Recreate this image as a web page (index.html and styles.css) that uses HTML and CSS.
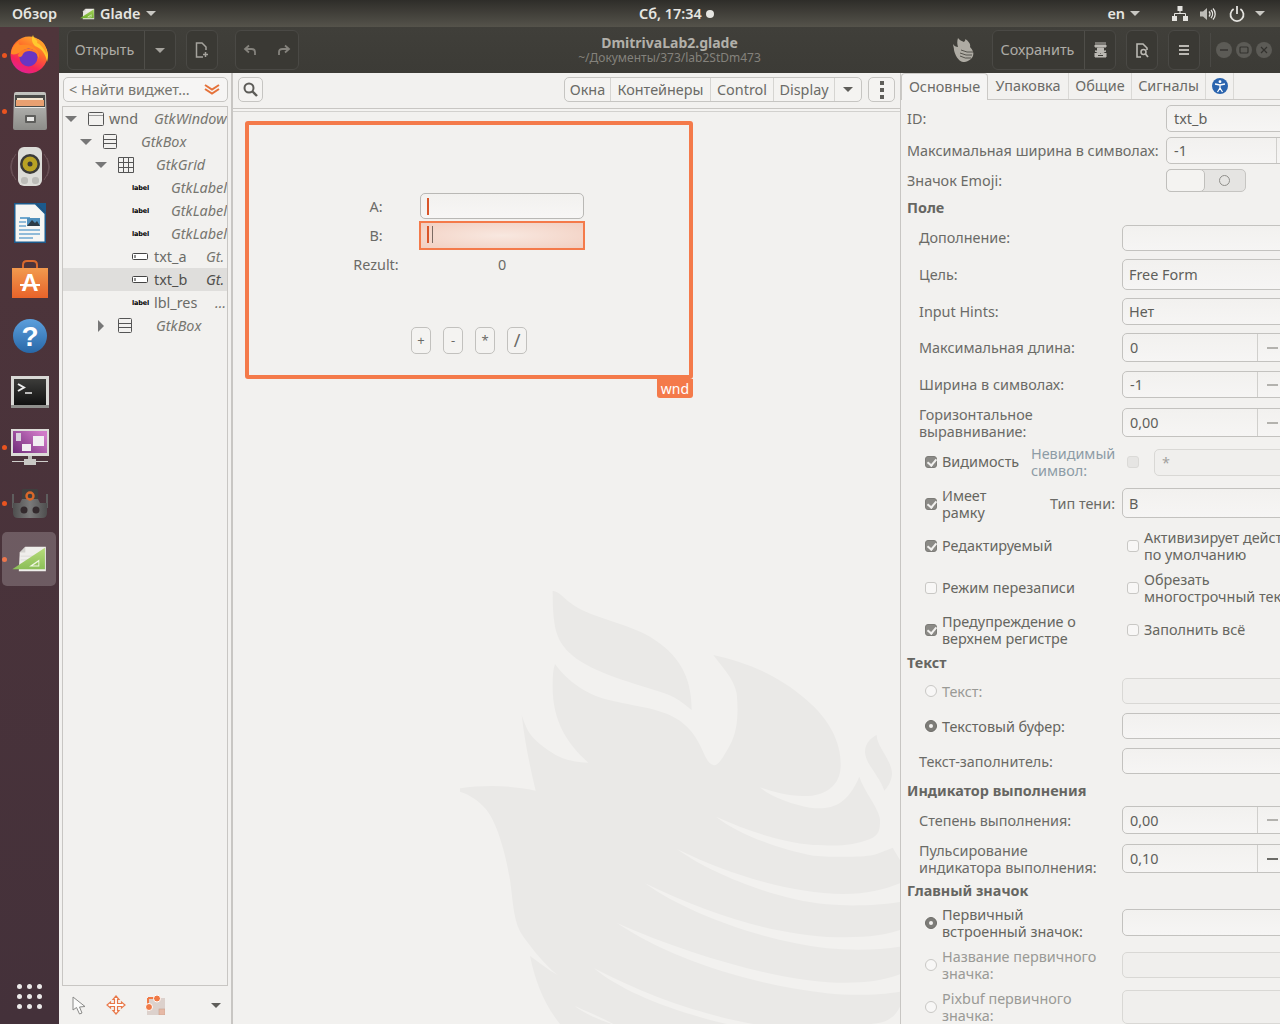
FILE: index.html
```html
<!DOCTYPE html>
<html lang="ru">
<head>
<meta charset="utf-8">
<title>Glade</title>
<link rel="stylesheet" href="styles.css">
</head>
<body>
<svg class="defs" width="0" height="0">
  <defs>
    <linearGradient id="ff" x1="0.8" y1="0" x2="0.3" y2="1"><stop offset="0" stop-color="#ffb52e"/><stop offset=".4" stop-color="#ff6a2a"/><stop offset=".75" stop-color="#f5245c"/><stop offset="1" stop-color="#e0209a"/></linearGradient>
    <linearGradient id="metal" x1="0" y1="0" x2="0" y2="1"><stop offset="0" stop-color="#c4c4c0"/><stop offset="1" stop-color="#8c8c89"/></linearGradient>
    <linearGradient id="bag" x1="0" y1="0" x2="0" y2="1"><stop offset="0" stop-color="#f29a4e"/><stop offset="1" stop-color="#e8632a"/></linearGradient>
    <linearGradient id="help" x1="0" y1="0" x2="0" y2="1"><stop offset="0" stop-color="#5c9fdc"/><stop offset="1" stop-color="#2868a8"/></linearGradient>
    <linearGradient id="term" x1="0" y1="0" x2="0" y2="1"><stop offset="0" stop-color="#3c3c3a"/><stop offset="1" stop-color="#111"/></linearGradient>
    <linearGradient id="purple" x1="0" y1="1" x2="1" y2="0.300"><stop offset="0" stop-color="#6e2a78"/><stop offset="1" stop-color="#d07ac8"/></linearGradient>
    <linearGradient id="green" x1="0" y1="0" x2="0" y2="1"><stop offset="0" stop-color="#a5d35a"/><stop offset="1" stop-color="#6fae2e"/></linearGradient>
    <linearGradient id="robot" x1="0" y1="0" x2="1" y2="0"><stop offset="0" stop-color="#4e4e4e"/><stop offset=".5" stop-color="#7a7a7a"/><stop offset="1" stop-color="#4e4e4e"/></linearGradient>
    <symbol id="glade-ic" viewBox="0 0 38 30">
      <path d="M8 8 L14 2 H36 V28 H7 Z" fill="#eceae6"/>
      <path d="M8 8 L14 2 V8 Z" fill="#c9c7c2"/>
      <path d="M9 12H24M9 16H20M9 20H15" stroke="#d4d2cd" stroke-width="1"/>
      <path d="M0 26 L35 3 V26 Z" fill="url(#green)"/>
      <path d="M18 23 L29 15.500 V23 Z" fill="#eef5dd"/>
      <path d="M22 22 L28 18 V22 Z" fill="#7db53a"/>
    </symbol>
  </defs>
</svg>

<div class="screen">
  <header class="topbar">
    <div class="tb-left">
      <span class="tb-item tb-overview">Обзор</span>
      <svg class="tb-glade" width="15" height="14"><use href="#glade-ic"/></svg>
      <span class="tb-item tb-app">Glade</span>
      <i class="caret caret-light"></i>
    </div>
    <div class="tb-clock"><span class="tb-item">Сб, 17:34</span><i class="clock-dot"></i></div>
    <div class="tb-right">
      <span class="tb-item">en</span>
      <i class="caret caret-light tb-en-caret"></i>
      <svg class="tb-net" width="16" height="15" viewBox="0 0 16 15"><path d="M5.500 0h5v5h-5zM0 10h5v5H0zM11 10h5v5h-5z" fill="#e4e3df"/><path d="M8 5v3M2.500 10V7.500h11V10" stroke="#e4e3df" fill="none"/></svg>
      <svg class="tb-vol" width="16" height="14" viewBox="0 0 16 14"><path d="M0 4.500h3L7 1v12L3 9.500H0z" fill="#bdbcb7"/><path d="M9 4.500a3.500 3.500 0 0 1 0 5M11 3a6 6 0 0 1 0 8M13 1.500a8 8 0 0 1 0 11" stroke="#e4e3df" stroke-width="1.300" fill="none"/></svg>
      <svg class="tb-pow" width="16" height="16" viewBox="0 0 16 16"><path d="M4.600 3a6.500 6.500 0 1 0 6.800 0" stroke="#e4e3df" stroke-width="1.800" fill="none"/><path d="M8 0v8" stroke="#e4e3df" stroke-width="1.800"/></svg>
      <i class="caret caret-light tb-pow-caret"></i>
    </div>
  </header>

  <nav class="dock">
    <div class="dock-item running">
      <svg width="40" height="40" viewBox="0 0 40 40">
        <circle cx="19" cy="20" r="18.500" fill="url(#ff)"/>
        <path d="M23 0 C24 6 33 8 36 13 C39 18 38 24 37 27 C36 19 31 13 25 11 C22 8 21 4 23 0Z" fill="#ffc92e"/>
        <path d="M28 4 C32 6 35 9 36 13 L37 20 C34 13 30 9 27 8Z" fill="#ff9d2a"/>
        <path d="M1 19 C1 13 5 8 9 7 C8 9 9 10 11 10 C16 9 24 10 28 17 C29 19 29 21 29 24 C27 16 18 13 13 16 C8 19 4 20 1 19Z" fill="#ff8a26"/>
        <circle cx="18.500" cy="22.500" r="9" fill="#6a35c2"/>
        <path d="M8 21 C9 15 17 12 24 15 C27 16 28 18 28 20 C24 15 15 15 13 19 C12 22 10 23 8 21Z" fill="#ff7a2a"/>
      </svg>
    </div>
    <div class="dock-item running">
      <svg width="36" height="38" viewBox="0 0 36 38">
        <path d="M2 2 Q2 0 4 0 H32 Q34 0 34 2 L35 36 Q35 38 33 38 H3 Q1 38 1 36Z" fill="url(#metal)"/>
        <rect x="3" y="3" width="30" height="12" fill="#4a4a48"/>
        <rect x="4" y="8" width="28" height="6" fill="#e9a071"/>
        <rect x="5" y="6" width="26" height="2" fill="#f4e6d2"/>
        <rect x="3" y="15" width="30" height="1" fill="#e8e8e6"/>
        <rect x="13" y="23" width="11" height="8" rx="1" fill="#5e5e5c"/>
        <rect x="15" y="25" width="7" height="4" fill="#e8e8e6"/>
      </svg>
    </div>
    <div class="dock-item">
      <svg width="40" height="42" viewBox="0 0 40 42">
        <path d="M6 8a20 20 0 0 0 0 26M34 8a20 20 0 0 1 0 26M3 12a20 20 0 0 0 0 18M37 12a20 20 0 0 1 0 18" stroke="#6b5258" fill="none"/>
        <rect x="8" y="1" width="24" height="39" rx="6" fill="#dcdcd8"/>
        <circle cx="20" cy="18" r="10" fill="#3a3a38"/>
        <circle cx="20" cy="18" r="7.500" fill="#b9a224"/>
        <circle cx="20" cy="18" r="2.500" fill="#3a3a38"/>
        <rect x="11" y="31" width="7" height="7" rx="3" fill="#bcbcb8"/>
        <rect x="22" y="31" width="7" height="7" rx="3" fill="#bcbcb8"/>
      </svg>
    </div>
    <div class="dock-item">
      <svg width="32" height="40" viewBox="0 0 32 40">
        <path d="M0 0 H22 L32 10 V40 H0Z" fill="#1b5a8c"/>
        <path d="M1.500 1.500 H21 L30.500 11 V38.500 H1.500Z" fill="#f6f6f4"/>
        <path d="M22 0 L32 0 V10Z" fill="#1b5a8c"/>
        <rect x="6" y="14" width="10" height="2" fill="#6fa8cf"/>
        <rect x="13" y="15" width="13" height="8" fill="#4f8fbc"/>
        <path d="M13 23 L18 17 L21 20 L23 18 L26 23Z" fill="#2d3b45"/>
        <path d="M5 19h7M5 23h7M5 27h21M5 31h21M5 35h14" stroke="#6fa8cf" stroke-width="1.500"/>
      </svg>
    </div>
    <div class="dock-item">
      <svg width="36" height="38" viewBox="0 0 36 38">
        <path d="M11 10 V5 Q11 1 15 1 H21 Q25 1 25 5 V10" stroke="#d96a2e" stroke-width="2" fill="none"/>
        <path d="M0 8 H36 V38 H0Z" fill="url(#bag)"/>
        <text class="ic-a" x="18" y="31" text-anchor="middle">A</text>
        <rect x="8" y="24" width="20" height="2" fill="#fff"/>
      </svg>
    </div>
    <div class="dock-item nudge">
      <svg width="34" height="34" viewBox="0 0 34 34">
        <circle cx="17" cy="17" r="17" fill="url(#help)"/>
        <text class="ic-q" x="17" y="27" text-anchor="middle">?</text>
      </svg>
    </div>
    <div class="dock-item nudge">
      <svg width="38" height="32" viewBox="0 0 38 32">
        <rect width="38" height="32" fill="#d9d9d6"/>
        <rect y="29" width="38" height="3" fill="#8f8f8c"/>
        <rect x="3" y="3" width="32" height="26" fill="url(#term)"/>
        <path d="M7 8 L13 11.500 L7 15" stroke="#eee" stroke-width="2" fill="none"/>
        <path d="M14 17h7" stroke="#eee" stroke-width="1.500"/>
      </svg>
    </div>
    <div class="dock-item running">
      <svg width="38" height="36" viewBox="0 0 38 36">
        <rect width="38" height="27" fill="#dcdcd8"/>
        <rect x="2" y="2" width="34" height="22" fill="url(#purple)"/>
        <rect x="5" y="4" width="5" height="8" fill="#d8d0dc"/>
        <rect x="22" y="7" width="11" height="10" fill="#f1eef2"/>
        <rect x="11" y="15" width="9" height="7" fill="#f1eef2"/>
        <rect x="17" y="27" width="4" height="3" fill="#bcbcb8"/>
        <rect x="13" y="30" width="12" height="6" fill="#c9c9c5"/>
        <path d="M1 32.500h12M25 32.500h12" stroke="#cfcfcc"/>
      </svg>
    </div>
    <div class="dock-item running">
      <svg width="36" height="30" viewBox="0 0 36 30">
        <path d="M1 6v14M35 6v14" stroke="#5e5e5e" stroke-width="2"/>
        <rect x="10" y="1" width="16" height="12" rx="1" fill="#3f3f3f"/>
        <path d="M1 15 H8 L10 11 H26 L28 15 H35 V25 Q35 30 30 30 H6 Q1 30 1 25Z" fill="url(#robot)"/>
        <circle cx="12" cy="22" r="3.500" fill="#332a2d"/>
        <circle cx="24" cy="22" r="3.500" fill="#332a2d"/>
        <circle cx="18" cy="8" r="3.500" fill="none" stroke="#d9682a" stroke-width="2.400"/>
      </svg>
    </div>
    <div class="dock-item running active">
      <svg width="36" height="28" viewBox="0 0 38 30"><use href="#glade-ic"/></svg>
    </div>
    <div class="dock-apps">
      <i></i><i></i><i></i><i></i><i></i><i></i><i></i><i></i><i></i>
    </div>
  </nav>

  <div class="window">
    <div class="headerbar">
      <div class="hb-group hb-open"><span class="hb-btn hb-text">Открыть</span><span class="hb-btn hb-arrow"><i class="caret caret-grey"></i></span></div>
      <div class="hb-group hb-single">
        <svg width="14" height="16" viewBox="0 0 14 16"><path d="M8 15H1.500V1H7L11 5V8" stroke="#a5a39d" stroke-width="1.500" fill="none"/><path d="M10.500 10v5M8 12.500h5" stroke="#a5a39d" stroke-width="1.500"/></svg>
      </div>
      <div class="hb-group hb-undo">
        <svg width="14" height="12" viewBox="0 0 14 12"><path d="M6 1.500 L2 5 L6 8.500M2 5H8.500Q12 5 12 8 V11" stroke="#85837d" stroke-width="1.800" fill="none"/></svg>
        <svg width="14" height="12" viewBox="0 0 14 12"><path d="M8 1.500 L12 5 L8 8.500M12 5H5.500Q2 5 2 8 V11" stroke="#85837d" stroke-width="1.800" fill="none"/></svg>
      </div>
      <div class="hb-title"><strong>DmitrivaLab2.glade</strong><span>~/Документы/373/lab2StDm473</span></div>
      <svg class="hb-logo" width="21" height="24" viewBox="0 0 21 24">
        <path d="M5 0 C6 2 9 3 11 4 C13 2 12 1 12 1 C16 3 18 7 17 9 C20 12 21 15 20 18 C18 22 14 24 10 24 C5 23 2 17 1 12 C1 10 0 7 0 6 C1 8 3 9 5 9 C4 6 4 3 5 0Z" fill="#aeaba3"/>
        <path d="M8 12q6 3 12 2M7 15q6 3 12 2M7 18q5 3 11 2" stroke="#3d3c37" stroke-width=".8" fill="none"/>
      </svg>
      <div class="hb-group hb-save"><span class="hb-btn hb-text">Сохранить</span>
        <span class="hb-btn hb-saveas"><svg width="13" height="16" viewBox="0 0 13 16"><path d="M1 1h11M1 3h11v2H1zM3.500 6h6v3H12L6.500 12 1 9h2.500zM1 11v4h11v-4" fill="#bbb9b3" stroke="#bbb9b3"/><path d="M4 13.500h5" stroke="#3d3c37"/></svg></span>
      </div>
      <div class="hb-group hb-single hb-docsearch">
        <svg width="13" height="15" viewBox="0 0 13 15"><path d="M5 14H1V1H7L11 5V7" stroke="#bbb9b3" stroke-width="1.600" fill="none"/><circle cx="7.500" cy="9" r="2.500" stroke="#bbb9b3" stroke-width="1.500" fill="none"/><path d="M9.500 11 L12 14" stroke="#bbb9b3" stroke-width="1.800"/></svg>
      </div>
      <div class="hb-group hb-single hb-menu"><i></i><i></i><i></i></div>
      <i class="hb-sep"></i>
      <div class="wm">
        <span class="wm-btn"><svg width="10" height="10" viewBox="0 0 10 10"><path d="M1 5h8" stroke="#33322e" stroke-width="1.400"/></svg></span>
        <span class="wm-btn"><svg width="10" height="10" viewBox="0 0 10 10"><rect x="1" y="2" width="8" height="6" rx="1" fill="none" stroke="#33322e" stroke-width="1.200"/></svg></span>
        <span class="wm-btn"><svg width="10" height="10" viewBox="0 0 10 10"><path d="M2 2l6 6M8 2l-6 6" stroke="#33322e" stroke-width="1.200"/></svg></span>
      </div>
    </div>

    <div class="panes">
      <aside class="palette">
        <div class="search-entry">
          <span class="search-text">&lt; Найти виджет…</span>
          <svg width="16" height="11" viewBox="0 0 16 11"><path d="M1 1 L8 5.500 L15 1M1 5 L8 9.500 L15 5" stroke="#e5723a" stroke-width="2" fill="none"/></svg>
        </div>
        <div class="tree">
          <div class="t-row l0">
            <i class="t-arrow open"></i>
            <span class="t-icon w21"><svg width="16" height="14" viewBox="0 0 16 14"><rect x=".5" y=".5" width="15" height="13" rx="1" fill="none" stroke="#555"/><path d="M1 3.500h14" stroke="#999"/></svg></span>
            <span class="t-name w45">wnd</span><span class="t-type">GtkWindow</span>
          </div>
          <div class="t-row l1">
            <i class="t-arrow open"></i>
            <span class="t-icon w38"><svg width="14" height="15" viewBox="0 0 14 15"><rect x=".5" y=".5" width="13" height="14" rx="1" fill="none" stroke="#555"/><path d="M1 5.500h12M1 9.500h12" stroke="#555"/></svg></span>
            <span class="t-type">GtkBox</span>
          </div>
          <div class="t-row l2">
            <i class="t-arrow open"></i>
            <span class="t-icon w38"><svg width="16" height="16" viewBox="0 0 16 16"><path d="M.5.500h15v15H.5zM5.500 1v14M10.500 1v14M1 5.500h14M1 10.500h14" fill="none" stroke="#555"/></svg></span>
            <span class="t-type">GtkGrid</span>
          </div>
          <div class="t-row l3"><span class="t-icon w39"><span class="lbl-ic">label</span></span><span class="t-type">GtkLabel</span></div>
          <div class="t-row l3"><span class="t-icon w39"><span class="lbl-ic">label</span></span><span class="t-type">GtkLabel</span></div>
          <div class="t-row l3"><span class="t-icon w39"><span class="lbl-ic">label</span></span><span class="t-type">GtkLabel</span></div>
          <div class="t-row l3"><span class="t-icon w22"><svg width="16" height="7" viewBox="0 0 16 7"><rect x=".5" y=".5" width="15" height="6" rx="1" fill="#fff" stroke="#444"/><path d="M3 2v3" stroke="#222"/></svg></span><span class="t-name w52">txt_a</span><span class="t-type">Gt.</span></div>
          <div class="t-row l3 selected"><span class="t-icon w22"><svg width="16" height="7" viewBox="0 0 16 7"><rect x=".5" y=".5" width="15" height="6" rx="1" fill="#fff" stroke="#444"/><path d="M3 2v3" stroke="#222"/></svg></span><span class="t-name w52">txt_b</span><span class="t-type">Gt.</span></div>
          <div class="t-row l3"><span class="t-icon w22"><span class="lbl-ic">label</span></span><span class="t-name w61">lbl_res</span><span class="t-type">…</span></div>
          <div class="t-row l2b">
            <i class="t-arrow closed"></i>
            <span class="t-icon w38"><svg width="14" height="15" viewBox="0 0 14 15"><rect x=".5" y=".5" width="13" height="14" rx="1" fill="none" stroke="#555"/><path d="M1 5.500h12M1 9.500h12" stroke="#555"/></svg></span>
            <span class="t-type">GtkBox</span>
          </div>
        </div>
        <div class="pal-tools">
          <svg class="pt-cursor" width="15" height="19" viewBox="0 0 15 19"><path d="M1 1 L1 14 L4.500 11.500 L7.500 18 L10 17 L7.500 11 L13 10.500Z" fill="#fbfbfa" stroke="#8a8a88"/></svg>
          <svg class="pt-move" width="20" height="20" viewBox="0 0 20 20"><path d="M10 1 L13 4.500 H11.500 V8.500 H15.500 V7 L19 10 L15.500 13 V11.500 H11.500 V15.500 H13 L10 19 L7 15.500 H8.500 V11.500 H4.500 V13 L1 10 L4.500 7 V8.500 H8.500 V4.500 H7Z" fill="#fff" stroke="#e8794a" stroke-width="1.200"/></svg>
          <svg class="pt-resize" width="20" height="20" viewBox="0 0 20 20"><rect x="2" y="3" width="18" height="17" fill="#dcd1cc"/><path d="M3 3h6M3 3v12" stroke="#f07a46" stroke-width="2"/><rect x="14" y="14" width="6" height="6" fill="#e6b9a6" stroke="#caa08e" stroke-width=".6"/><circle cx="12" cy="3.500" r="3.500" fill="#f07a46" stroke="#fff"/><circle cx="4" cy="12" r="3.500" fill="#f07a46" stroke="#fff"/></svg>
          <i class="caret caret-dark pt-caret"></i>
        </div>
      </aside>

      <main class="center">
        <div class="c-toolbar">
          <span class="tool-btn tb-search"><svg width="15" height="15" viewBox="0 0 15 15"><circle cx="6" cy="6" r="4.500" fill="none" stroke="#5d5c58" stroke-width="2"/><path d="M9.500 9.500 L14 14" stroke="#5d5c58" stroke-width="2.400"/></svg></span>
          <div class="seg">
            <span class="seg-btn s46">Окна</span><span class="seg-btn s100">Контейнеры</span><span class="seg-btn s63">Control</span><span class="seg-btn s61">Display</span><span class="seg-btn s27"><i class="caret caret-dark"></i></span>
          </div>
          <span class="tool-btn tb-more"><i></i><i></i><i></i></span>
        </div>
        <div class="canvas">
          <svg class="phoenix" width="440" height="464" viewBox="0 0 1320 1392">
            <path d="M278 92 C300 95 310 115 340 135 C400 175 500 190 570 230 C650 280 695 340 695 450 C670 430 650 410 600 395 C500 365 380 330 330 280 C290 240 278 210 278 92 Z"/>
            <path d="M285 312 C320 360 380 410 470 425 C560 445 640 450 690 510 C730 555 735 610 760 615 C775 620 790 590 810 555 C835 510 835 450 830 400 C820 350 780 315 760 285 C850 305 950 340 1040 420 C1110 480 1145 550 1142 620 C1140 680 1090 710 1030 708 C980 708 940 695 900 682 C930 710 1000 735 1050 743 C1110 750 1160 740 1198 650 C1210 690 1260 750 1260 780 C1260 810 1258 825 1230 837 C1170 860 1130 857 1060 855 C950 845 860 810 768 770 C830 820 960 870 1060 887 C1130 892 1200 892 1240 885 C1270 875 1285 868 1298 863 L1320 900 L1320 970 C1270 990 1220 1002 1150 1002 C1000 1000 820 950 652 868 C750 940 950 1020 1100 1033 C1180 1040 1260 1035 1320 1026 L1320 1110 C1260 1130 1200 1132 1130 1132 C950 1125 760 1070 555 970 C680 1060 900 1140 1100 1165 C1180 1172 1260 1170 1320 1160 L1320 1243 C1260 1265 1200 1270 1130 1268 C950 1260 700 1190 472 1090 C620 1190 850 1270 1100 1300 C1180 1308 1260 1305 1320 1295 L1320 1340 C1300 1380 1270 1392 1220 1392 L880 1392 C700 1360 550 1300 402 1225 C480 1290 620 1350 800 1392 L460 1392 C420 1370 380 1355 345 1338 C370 1360 420 1380 455 1392 L300 1392 C250 1330 225 1260 210 1188 C240 1210 265 1230 293 1245 C250 1210 220 1170 190 1130 C160 1090 160 1030 150 960 C135 870 110 790 80 750 C55 720 30 705 0 695 L0 685 C70 675 150 675 227 692 C210 620 195 550 185 465 C200 510 210 530 250 560 C290 590 320 605 385 608 C320 550 275 480 278 370 C278 345 280 325 285 312 Z"/>
            <path d="M1250 525 C1250 560 1295 600 1296 640 C1296 660 1285 680 1273 692 C1260 650 1215 610 1215 575 C1215 550 1235 532 1250 525 Z"/>
          </svg>
          <div class="gwin">
            <div class="gw-grid">
              <span class="gw-label">A:</span>
              <span class="gw-entry"><i class="gw-caret"></i></span>
              <span class="gw-label gw-b">B:</span>
              <span class="gw-entry gw-sel"><i class="gw-caret"></i><i class="gw-text-caret"></i></span>
              <span class="gw-label">Rezult:</span>
              <span class="gw-value">0</span>
            </div>
            <div class="gw-buttons">
              <span class="gw-btn">+</span><span class="gw-btn">-</span><span class="gw-btn">*</span><span class="gw-btn gw-slash">/</span>
            </div>
            <span class="gw-tag">wnd</span>
          </div>
        </div>
      </main>

      <section class="props">
        <div class="tabs">
          <span class="tab active">Основные</span>
          <span class="tab t-pack">Упаковка</span>
          <span class="tab t-common">Общие</span>
          <span class="tab t-signals">Сигналы</span>
          <span class="tab t-a11y"><svg width="16" height="16" viewBox="0 0 16 16"><circle cx="8" cy="8" r="8" fill="#2a64ae"/><circle cx="8" cy="3.700" r="1.400" fill="#fff"/><path d="M3 6 L8 7 L13 6M8 7 V10 M8 10 L5.500 14M8 10 L10.500 14" stroke="#fff" stroke-width="1.300" fill="none"/></svg></span>
        </div>
        <div class="form">
          <div class="row h27 first"><label class="lbl lw259">ID:</label><span class="entry">txt_b</span></div>
          <div class="row h27 g5"><label class="lbl lw259">Максимальная ширина в символах:</label><span class="entry spin-short">-1</span></div>
          <div class="row h23 g5"><label class="lbl lw259">Значок Emoji:</label><span class="switch"><i class="sw-thumb"></i><i class="sw-off"></i></span></div>
          <div class="row h17"><h3>Поле</h3></div>
          <div class="row h26 in"><label class="lbl lw203 up1">Дополнение:</label><span class="entry"></span></div>
          <div class="row h31 in"><label class="lbl lw203">Цель:</label><span class="entry combo">Free Form</span></div>
          <div class="row h27 in"><label class="lbl lw203">Input Hints:</label><span class="entry combo2">Нет</span></div>
          <div class="row h29 in"><label class="lbl lw203">Максимальная длина:</label><span class="entry spin">0<i class="minus"></i></span></div>
          <div class="row h27 g9 in"><label class="lbl lw203">Ширина в символах:</label><span class="entry spin">-1<i class="minus"></i></span></div>
          <div class="row h29 g10 in"><label class="lbl lw203">Горизонтальное<br>выравнивание:</label><span class="entry spin">0,00<i class="minus"></i></span></div>

          <div class="row h34 ck">
            <span class="ck-left"><i class="check on"></i><span class="ck-txt w89 up1">Видимость</span><span class="dim-lbl">Невидимый<br>символ:</span></span>
            <span class="ck-right"><i class="check dis"></i><span class="entry dis star">*</span></span>
          </div>
          <div class="row h34 ck">
            <span class="ck-left lw197"><i class="check on"></i><span class="ck-txt">Имеет<br>рамку</span><span class="shadow-lbl up1">Тип тени:</span></span>
            <span class="entry combo shadow">В</span>
          </div>
          <div class="row h34 ck">
            <span class="ck-left"><i class="check on"></i><span class="ck-txt up1">Редактируемый</span></span>
            <span class="ck-right"><i class="check"></i><span class="ck-txt">Активизирует действие<br>по умолчанию</span></span>
          </div>
          <div class="row h34 ck">
            <span class="ck-left"><i class="check"></i><span class="ck-txt up1">Режим перезаписи</span></span>
            <span class="ck-right"><i class="check"></i><span class="ck-txt">Обрезать<br>многострочный текст</span></span>
          </div>
          <div class="row h34 ck">
            <span class="ck-left"><i class="check on"></i><span class="ck-txt">Предупреждение о<br>верхнем регистре</span></span>
            <span class="ck-right"><i class="check"></i><span class="ck-txt up1">Заполнить всё</span></span>
          </div>

          <div class="row h17"><h3>Текст</h3></div>
          <div class="row h26 g6 rd"><span class="ck-left lw197"><i class="radio"></i><span class="ck-txt dim">Текст:</span></span><span class="entry dis"></span></div>
          <div class="row h26 g9 rd"><span class="ck-left lw197"><i class="radio on"></i><span class="ck-txt">Текстовый буфер:</span></span><span class="entry"></span></div>
          <div class="row h26 g9 in"><label class="lbl lw203">Текст-заполнитель:</label><span class="entry"></span></div>
          <div class="row h18"><h3>Индикатор выполнения</h3></div>
          <div class="row h28 g6 in"><label class="lbl lw203">Степень выполнения:</label><span class="entry spin">0,00<i class="minus"></i></span></div>
          <div class="row h29 g10 in"><label class="lbl lw203">Пульсирование<br>индикатора выполнения:</label><span class="entry spin">0,10<i class="minus dark"></i></span></div>
          <div class="row h18 g9"><h3>Главный значок</h3></div>
          <div class="row h27 g9 rd"><span class="ck-left lw197"><i class="radio on"></i><span class="ck-txt">Первичный<br>встроенный значок:</span></span><span class="entry"></span></div>
          <div class="row h26 g16 rd"><span class="ck-left lw197"><i class="radio"></i><span class="ck-txt dim">Название первичного<br>значка:</span></span><span class="entry dis"></span></div>
          <div class="row h34 g12 rd"><span class="ck-left lw197"><i class="radio"></i><span class="ck-txt dim">Pixbuf первичного<br>значка:</span></span><span class="entry dis"></span></div>
        </div>
      </section>
    </div>
  </div>
</div>
</body>
</html>
```

FILE: styles.css
```css
* { box-sizing: border-box; }
html, body { margin: 0; padding: 0; }
body { width: 1280px; height: 1024px; overflow: hidden; font-family: "Noto Sans", "DejaVu Sans", sans-serif; font-size: 14.4px; line-height: 17px; color: #6b6b67; background: #f2f1ef; }
.defs { position: absolute; }
i { display: block; font-style: normal; }
svg { display: block; flex: none; }

.screen { display: grid; grid-template-columns: 59px 1fr; grid-template-rows: 27px 1fr; width: 1280px; height: 1024px; overflow: hidden; }

/* carets */
.caret { width: 0; height: 0; border-left: 5px solid transparent; border-right: 5px solid transparent; border-top: 5px solid #aaa; flex: none; }
.caret-light { border-top-color: #c9c8c3; }
.caret-grey { border-top-color: #a5a39d; }
.caret-dark { border-top-color: #5f5e5a; }

/* top bar */
.topbar { grid-column: 1 / 3; display: flex; align-items: center; background: linear-gradient(#2e2d29, #55534b); }
.tb-left { width: 639px; flex: none; display: flex; align-items: center; }
.tb-item { color: #e6e6e2; font-weight: 600; font-size: 14.4px; white-space: nowrap; }
.tb-overview { margin-left: 12px; width: 68px; }
.tb-glade { width: 15px; }
.tb-app { margin-left: 5px; width: 46px; }
.tb-clock { display: flex; align-items: center; }
.clock-dot { width: 8px; height: 8px; border-radius: 50%; background: #e6e6e2; margin-left: 4px; }
.tb-right { flex: 1; display: flex; align-items: center; justify-content: flex-end; padding-right: 15px; }
.tb-en-caret { margin: 0 32px 0 5px; }
.tb-vol { margin: 0 13px 0 12px; }
.tb-pow-caret { margin-left: 10px; }

/* dock */
.dock { display: flex; flex-direction: column; background: linear-gradient(#4f353b, #44313a); position: relative; }
.dock-item { height: 56px; flex: none; display: flex; align-items: center; justify-content: center; position: relative; }
.dock-item.nudge { padding-top: 2px; }
.dock-item.running::before { content: ""; position: absolute; left: 2px; top: 25.500px; width: 5px; height: 5px; border-radius: 50%; background: #e95420; }
.dock-item.active::after { content: ""; position: absolute; left: 2px; top: 1px; width: 54px; height: 54px; border-radius: 5px; background: rgba(255, 255, 255, .2); }
.dock-apps { margin-top: auto; height: 56px; display: grid; grid-template-columns: repeat(3, 5px); grid-auto-rows: 5px; gap: 5px; justify-content: center; align-content: center; }
.dock-apps i { border-radius: 50%; background: #eceaea; }
.ic-a { font: 700 24px "Liberation Sans", sans-serif; fill: #fff; }
.ic-q { font: 700 28px "Liberation Sans", sans-serif; fill: #fff; }

/* window */
.window { display: flex; flex-direction: column; min-width: 0; overflow: hidden; }
.headerbar { height: 46px; flex: none; display: flex; align-items: center; padding-left: 8px; background: linear-gradient(#403f3a, #3c3b36); }
.hb-group { height: 40px; border: 1px solid #4a4945; border-radius: 6px; background: #3a3934; display: flex; align-items: center; flex: none; }
.hb-btn { height: 100%; display: flex; align-items: center; justify-content: center; }
.hb-text { color: #aeaca6; padding-bottom: 1px; }
.hb-open { width: 109px; }
.hb-open .hb-text { width: 77px; padding-right: 3px; border-right: 1px solid #4f4e49; }
.hb-arrow { flex: 1; }
.hb-single { width: 32px; justify-content: center; margin-left: 10px; }
.hb-undo { width: 64px; margin-left: 17px; justify-content: center; gap: 20px; }
.hb-title { flex: 1; display: flex; flex-direction: column; align-items: center; padding-left: 87px; }
.hb-title strong { font-size: 14px; color: #b2b0aa; font-weight: 700; line-height: 16px; }
.hb-title span { font-size: 12px; color: #84827c; line-height: 14px; }
.hb-logo { margin-right: 18px; }
.hb-save { width: 124px; }
.hb-save .hb-text { width: 92px; padding-right: 2px; border-right: 1px solid #4f4e49; }
.hb-saveas { flex: 1; }
.hb-menu { flex-direction: column; gap: 2px; }
.hb-menu i { width: 10px; height: 2px; background: #bbb9b3; }
.hb-sep { width: 1px; height: 34px; background: #4a4945; margin-left: 10px; }
.wm { display: flex; gap: 4px; margin-left: 5px; padding-right: 8px; }
.wm-btn { width: 16px; height: 16px; border-radius: 50%; background: #5c5b56; display: flex; align-items: center; justify-content: center; }

.panes { flex: 1; display: flex; min-height: 0; }

/* palette */
.palette { width: 174px; flex: none; border-right: 2px solid #c8c6c3; padding: 4px 0 0 3px; display: flex; flex-direction: column; }
.search-entry { width: 165px; height: 25px; margin-left: 1px; border: 1px solid #c6c5c2; border-radius: 5px; background: #f6f5f4; display: flex; align-items: center; padding-left: 5px; flex: none; }
.search-text { width: 135px; color: #77766f; white-space: nowrap; overflow: hidden; }
.tree { width: 166px; flex: 1; margin-top: 4px; border: 1px solid #c8c6c3; }
.t-row { height: 23px; display: flex; align-items: center; white-space: nowrap; overflow: hidden; }
.t-row.selected { background: #dfdedc; color: #4f4f4c; }
.t-row.selected .t-type { color: #4f4f4c; }
.l0 { padding-left: 2px; }
.l1 { padding-left: 17px; }
.l2 { padding-left: 32px; }
.l2b { padding-left: 35px; }
.l3 { padding-left: 69px; }
.t-arrow { width: 23px; flex: none; position: relative; height: 8px; }
.t-arrow.open::before { content: ""; position: absolute; left: 0; top: 1px; border-left: 6px solid transparent; border-right: 6px solid transparent; border-top: 6px solid #777; }
.t-arrow.closed { width: 20px; }
.t-arrow.closed::before { content: ""; position: absolute; left: 0; top: -2px; border-top: 6px solid transparent; border-bottom: 6px solid transparent; border-left: 6px solid #777; }
.t-icon { flex: none; display: block; }
.w21 { width: 21px; }
.w38 { width: 38px; }
.w39 { width: 39px; }
.w22 { width: 22px; }
.t-name { flex: none; }
.w45 { width: 45px; }
.w52 { width: 52px; }
.w61 { width: 61px; }
.t-type { font-style: italic; color: #77766f; }
.lbl-ic { display: block; font: 700 6.500px/10px "DejaVu Sans", sans-serif; color: #000; letter-spacing: -.2px; }
.pal-tools { height: 38px; flex: none; display: flex; align-items: center; position: relative; }
.pt-cursor { margin-left: 10px; }
.pt-move { margin-left: 19px; }
.pt-resize { margin-left: 19px; }
.pt-caret { margin-left: 46px; }

/* center */
.center { width: 667px; flex: none; display: flex; flex-direction: column; min-height: 0; }
.c-toolbar { height: 36px; flex: none; display: flex; align-items: flex-start; padding: 4px 0 0 5px; border-bottom: 1px solid #c8c6c3; box-shadow: 0 2px 0 #f4f3f1, 0 3px 0 #d2d1ce; }
.tool-btn { height: 25px; border: 1px solid #c6c5c2; border-radius: 5px; background: #f4f3f1; display: flex; align-items: center; justify-content: center; flex: none; }
.tb-search { width: 25px; }
.seg { display: flex; margin-left: 301px; height: 25px; border: 1px solid #c6c5c2; border-radius: 5px; background: #f4f3f1; flex: none; }
.seg-btn { display: flex; align-items: center; justify-content: center; border-right: 1px solid #d6d5d2; color: #6b6b67; flex: none; }
.seg-btn:last-child { border-right: 0; }
.s46 { width: 46px; }
.s100 { width: 100px; }
.s63 { width: 63px; }
.s61 { width: 61px; }
.s27 { width: 26px; }
.tb-more { width: 27px; margin-left: 6px; flex-direction: column; gap: 3px; }
.tb-more i { width: 4px; height: 4px; background: #5f5e5a; }
.canvas { flex: 1; position: relative; overflow: hidden; }
.phoenix { position: absolute; left: 227px; top: 451px; fill: #eae9e7; }
.gwin { position: absolute; left: 12px; top: 12px; width: 448px; height: 258px; border: 4px solid #f47a4a; border-radius: 3px; padding-top: 68px; background: #f2f1ef; }
.gw-grid { display: grid; grid-template-columns: 60px 164px; grid-template-rows: 26px 31px 29px; column-gap: 14px; margin-left: 97px; }
.gw-label { display: flex; align-items: center; justify-content: center; }
.gw-b { padding-top: 2px; }
.gw-entry { margin-bottom: 1px; border: 1px solid #b9b8b5; border-radius: 5px; background: linear-gradient(#f2f1ef, #f7f6f5); padding: 4px 6px; height: 26px; }
.gw-caret { width: 2px; height: 17px; background: #d9562a; }
.gw-sel { display: flex; gap: 3px; height: 29px; margin: 2px -1px 0; border: 2px solid #f47a4a; border-radius: 0; background: radial-gradient(ellipse at center, #f8e8e0, #f2cfc1); padding: 3px 6px; }
.gw-text-caret { width: 1px; height: 17px; margin-top: 0; background: #7b6a62; }
.gw-value { display: flex; align-items: center; justify-content: center; }
.gw-buttons { display: flex; gap: 12px; margin: 48px 0 0 162px; }
.gw-btn { width: 20px; height: 27px; border: 1px solid #c2c1be; border-radius: 5px; background: #f4f3f1; display: flex; align-items: center; justify-content: center; font-size: 13px; }
.gw-slash { font-size: 18px; }
.gw-tag { position: absolute; right: -4px; top: 254px; width: 36px; height: 19px; background: #f47a4a; color: #fff; border-radius: 0 0 3px 3px; display: flex; align-items: center; justify-content: center; font-size: 14px; }

/* properties */
.props { flex: 1; min-width: 0; border-left: 1px solid #c8c6c3; overflow: hidden; }
.tabs { height: 27px; display: flex; border-bottom: 1px solid #cbc9c6; }
.tab { display: flex; align-items: center; justify-content: center; border-right: 1px solid #dad9d6; white-space: nowrap; padding-bottom: 1px; }
.tab.active { width: 87px; height: 27px; background: #f5f4f3; border: 1px solid #cbc9c6; border-bottom: 0; border-radius: 4px 4px 0 0; }
.t-pack { width: 81px; }
.t-common { width: 63px; }
.t-signals { width: 74px; }
.t-a11y { width: 28px; }
.form { padding-left: 6px; display: flex; flex-direction: column; }
.row { display: flex; align-items: center; margin-top: 8px; white-space: nowrap; flex: none; }
.row.first { margin-top: 5px; }
.g5 { margin-top: 5px; }
.g6 { margin-top: 6px; }
.g9 { margin-top: 9px; }
.g10 { margin-top: 10px; }
.g12 { margin-top: 12px; }
.g16 { margin-top: 16px; }
.h17 { height: 17px; }
.h18 { height: 18px; }
.h23 { height: 23px; }
.h26 { height: 26px; }
.h27 { height: 27px; }
.h28 { height: 28px; }
.h29 { height: 29px; }
.h31 { height: 31px; }
.h34 { height: 34px; }
.in { padding-left: 12px; }
.ck, .rd { padding-left: 18px; }
.up1 { margin-bottom: 2px; }
h3 { margin: 0 0 2px; font-size: 14.4px; font-weight: 700; color: #666662; }
.lbl { flex: none; display: block; }
.lw259 { width: 259px; }
.lw203 { width: 203px; }
.entry { flex: none; width: 300px; align-self: stretch; display: flex; align-items: center; border: 1px solid #c3c2bf; border-radius: 5px; background: linear-gradient(#f2f1ef, #f6f5f4); padding-left: 7px; color: #5f5f5b; position: relative; }
.entry.combo { padding-left: 6px; }
.entry.combo2 { padding-left: 6px; }
.entry.dis { background: #f0efed; border-color: #d9d8d5; color: #a2a19d; }
.entry.star { margin: 4px 0 3px 15px; }
.entry.shadow { margin: 1px 0 3px; }
.spin::after { content: ""; position: absolute; left: 134px; top: 0; bottom: 0; width: 1px; background: #d0cfcc; }
.spin-short::after { content: ""; position: absolute; left: 109px; top: 0; bottom: 0; width: 1px; background: #d0cfcc; }
.minus { position: absolute; left: 144px; top: 50%; width: 11px; height: 2px; margin-top: -1px; background: #b3b2ae; }
.minus.dark { background: #6b6b67; }
.switch { width: 80px; height: 23px; border: 1px solid #c6c5c2; border-radius: 5px; background: #e5e4e2; display: flex; align-items: center; }
.sw-thumb { width: 39px; height: 23px; margin: 0 0 0 -1px; border: 1px solid #c0bfbc; border-radius: 5px; background: #f4f3f1; }
.sw-off { width: 11px; height: 11px; border: 1px solid #8f8e8a; border-radius: 50%; margin-left: 14px; }
.ck-left { width: 202px; flex: none; display: flex; align-items: center; }
.ck-right { display: flex; align-items: center; flex: none; align-self: stretch; }
.lw197 { width: 197px; }
.ck-txt { margin-left: 5px; color: #66665f; }
.w89 { width: 89px; flex: none; }
.dim { color: #9a9a96; }
.dim-lbl { color: #8d9ca6; }
.shadow-lbl { margin-left: auto; margin-right: 7px; }
.check { width: 12px; height: 12px; flex: none; border: 1px solid #c9c8c5; border-radius: 3px; background: #f8f7f6; position: relative; }
.check.on { background: #8b8a86; border-color: #7d7c78; }
.check.on::after { content: ""; position: absolute; left: 3px; top: 0; width: 4px; height: 7px; border: solid #f2f1ef; border-width: 0 2px 2px 0; transform: rotate(40deg); }
.check.dis { background: #e6e5e3; border-color: #dbdad7; }
.radio { width: 12px; height: 12px; flex: none; border: 1px solid #c9c8c5; border-radius: 50%; background: #f8f7f6; position: relative; }
.radio.on { background: #7d7c78; border-color: #6e6d69; }
.radio.on::after { content: ""; position: absolute; left: 3px; top: 3px; width: 4px; height: 4px; border-radius: 50%; background: #f2f1ef; }
```
